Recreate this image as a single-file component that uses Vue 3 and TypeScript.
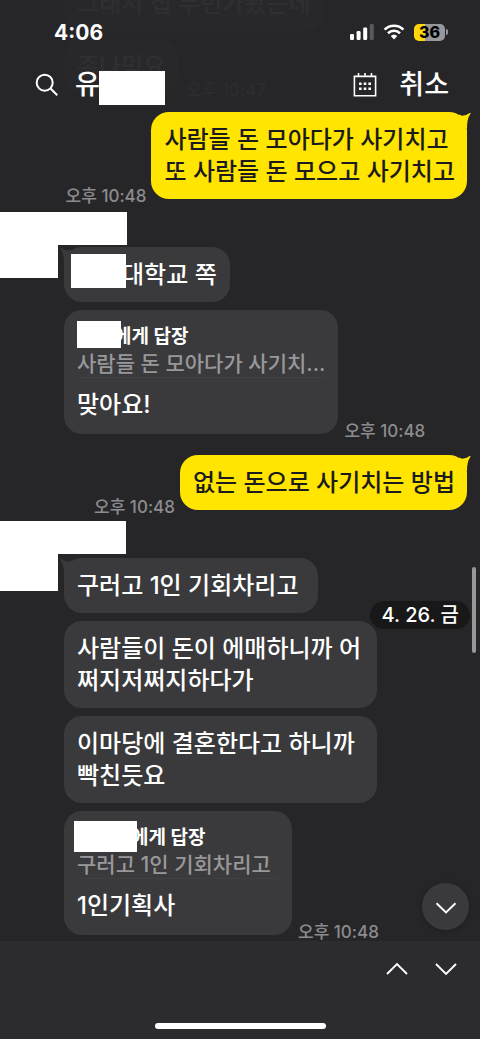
<script setup lang="ts">
import { ref } from 'vue'

interface Reply {
  to: string
  quote: string
  coverWide: boolean
}

interface Bubble {
  text: string
  covered?: boolean
  reply?: Reply
  time?: string
}

interface Group {
  mine: boolean
  bubbles: Bubble[]
}

const groups = ref<Group[]>([
  {
    mine: true,
    bubbles: [{ text: '사람들 돈 모아다가 사기치고\n또 사람들 돈 모으고 사기치고', time: '오후 10:48' }],
  },
  {
    mine: false,
    bubbles: [
      { text: '대학교 쪽', covered: true },
      {
        text: '맞아요!',
        reply: { to: '에게 답장', quote: '사람들 돈 모아다가 사기치...', coverWide: false },
        time: '오후 10:48',
      },
    ],
  },
  {
    mine: true,
    bubbles: [{ text: '없는 돈으로 사기치는 방법', time: '오후 10:48' }],
  },
  {
    mine: false,
    bubbles: [
      { text: '구러고 1인 기회차리고\u00a0' },
      { text: '사람들이 돈이 에매하니까 어쩌지저쩌지하다가' },
      { text: '이마당에 결혼한다고 하니까 빡친듯요' },
      {
        text: '1인기획사',
        reply: { to: '에게 답장', quote: '구러고 1인 기회차리고\u00a0', coverWide: true },
        time: '오후 10:48',
      },
    ],
  },
])
</script>

<template>
  <div class="screen">
    <header class="top">
      <div class="ghost" aria-hidden="true">
        <p class="ghost-bubble first">그래서 집 두번가봤는데</p>
        <p class="ghost-bubble second">존나먹요</p>
        <span class="ghost-time">오후 10:47</span>
      </div>
      <div class="status">
        <span class="clock">4:06</span>
        <div class="status-icons">
          <svg class="signal" viewBox="0 0 24 16" aria-hidden="true">
            <rect x="0" y="10" width="4" height="6" rx="1.3" />
            <rect x="6.6" y="7" width="4" height="9" rx="1.3" />
            <rect x="13.2" y="3.5" width="4" height="12.5" rx="1.3" />
            <rect x="19.8" y="0" width="4" height="16" rx="1.3" class="dim" />
          </svg>
          <svg class="wifi" viewBox="0 0 22 16" aria-hidden="true">
            <path d="M1.6 5.6a13.4 13.4 0 0 1 18.8 0" />
            <path d="M5 9.2a8.6 8.6 0 0 1 12 0" />
            <path class="dot" d="M7.7 12a4.8 4.8 0 0 1 6.6 0L11 15.6z" />
          </svg>
          <div class="battery"><span class="cell">36</span><i class="nub"></i></div>
        </div>
      </div>
      <div class="bar">
        <svg class="search" viewBox="0 0 24 24" aria-hidden="true">
          <circle cx="9.7" cy="9.7" r="8" />
          <path d="M15.5 15.5l6.8 6.8" />
        </svg>
        <h1 class="title">유<span class="cover title-cover"></span></h1>
        <button class="plain calendar" type="button" aria-label="날짜 선택">
          <svg viewBox="0 0 24 26">
            <path class="frame" d="M1.4 4.4h21.2v19.4H1.4zM5.5 1v3.4M12 1v3.4M18.5 1v3.4" />
            <path
              class="dots"
              d="M6 10.5h2.6v2.6H6zM10.7 10.5h2.6v2.6h-2.6zM15.4 10.5H18v2.6h-2.6zM6 15.4h2.6V18H6zM10.7 15.4h2.6V18h-2.6zM15.4 15.4H18V18h-2.6z"
            />
          </svg>
        </button>
        <button class="plain cancel" type="button">취소</button>
      </div>
    </header>

    <main class="chat">
      <section v-for="(g, gi) in groups" :key="gi" class="group" :class="g.mine ? 'mine' : 'theirs'">
        <div v-if="!g.mine" class="avatar"></div>
        <div class="column">
          <div v-if="!g.mine" class="sender"></div>
          <div v-for="(b, bi) in g.bubbles" :key="bi" class="row">
            <div class="bubble" :class="{ reply: b.reply }">
              <svg v-if="bi === 0" class="tail" viewBox="0 0 12 16" aria-hidden="true">
                <path d="M0 2.400L3 3.800Q7.500 3.200 10.300 1.200Q12.500 0.200 11.300 2Q8 6.500 8 16L0 16z" />
              </svg>
              <template v-if="b.reply">
                <p class="to" :class="{ wide: b.reply.coverWide }"><span class="cover"></span>{{ b.reply.to }}</p>
                <p class="quote">{{ b.reply.quote }}</p>
              </template>
              <div class="line">
                <span v-if="b.covered" class="cover text-cover"></span>
                <p>{{ b.text }}</p>
              </div>
            </div>
            <time v-if="b.time" class="time">{{ b.time }}</time>
          </div>
        </div>
      </section>

      <div class="date-pill">4. 26. 금</div>
      <div class="scrollbar"></div>
      <button class="fab" type="button" aria-label="맨 아래로">
        <svg viewBox="0 0 22 12"><path d="M1.500 1.200L11 10.500L20.500 1.200" /></svg>
      </button>
    </main>

    <footer class="bottom">
      <div class="nav">
        <button class="plain step" type="button" aria-label="이전 결과">
          <svg viewBox="0 0 22 14"><path d="M1 12L11 2L21 12" /></svg>
        </button>
        <button class="plain step" type="button" aria-label="다음 결과">
          <svg viewBox="0 0 22 14"><path d="M1 2L11 12L21 2" /></svg>
        </button>
      </div>
      <div class="home"></div>
    </footer>
  </div>
</template>

<style>
body {
  background: #262628;
}
</style>

<style scoped>
.screen {
  display: flex;
  flex-direction: column;
  min-height: 100vh;
  background: #262628;
  color: #fff;
  font-family: Inter, 'Noto Sans CJK KR', sans-serif;
  font-weight: 500;
}
p,
h1 {
  margin: 0;
}
.plain {
  padding: 0;
  border: 0;
  background: none;
  color: inherit;
  font: inherit;
}
svg {
  display: block;
}
.cover {
  flex: none;
  background: #fff;
}

/* header */
.top {
  position: relative;
  overflow: hidden;
  height: 112px;
}
.ghost {
  position: absolute;
  inset: 0;
  color: #2f2f31;
  font-size: 24px;
  line-height: 32px;
}
.ghost-bubble {
  position: absolute;
  left: 64px;
  padding: 12px 13px 11px;
  border-radius: 18px;
  background: #28282a;
}
.first {
  top: -24px;
}
.second {
  top: 39px;
}
.ghost-time {
  position: absolute;
  left: 186px;
  top: 80px;
  color: #2c2c2e;
  font-size: 17px;
  line-height: 20px;
}
.status {
  position: relative;
  display: flex;
  justify-content: space-between;
  align-items: center;
  height: 20px;
  padding: 22px 32px 0 54px;
}
.clock {
  font-size: 21px;
  font-weight: 700;
}
.status-icons {
  display: flex;
  align-items: center;
  gap: 9px;
}
.signal {
  width: 24px;
  height: 16px;
  fill: #fff;
}
.dim {
  fill: #59595b;
}
.wifi {
  width: 22px;
  height: 16px;
  fill: none;
  stroke: #fff;
  stroke-width: 2.7;
}
.wifi .dot {
  fill: #fff;
  stroke: none;
}
.battery {
  display: flex;
  align-items: center;
  gap: 1px;
}
.cell {
  width: 31px;
  height: 17px;
  border-radius: 5px;
  background: linear-gradient(90deg, #ffd60a 36%, #98989b 36%);
  color: #000;
  font-size: 16px;
  font-weight: 800;
  line-height: 17px;
  text-align: center;
}
.nub {
  width: 2px;
  height: 6px;
  border-radius: 0 2px 2px 0;
  background: #98989b;
}
.bar {
  position: relative;
  display: flex;
  align-items: center;
  height: 36px;
  margin-top: 25px;
  padding: 0 32px 0 35px;
  font-size: 27px;
  line-height: 36px;
}
.search {
  width: 24px;
  height: 24px;
  fill: none;
  stroke: #fff;
  stroke-width: 2;
}
.title {
  display: flex;
  align-items: center;
  margin-left: 16px;
  font-size: 27px;
  font-weight: 500;
}
.title-cover {
  width: 66px;
  height: 34px;
  margin: 5px 0 0 -1px;
  z-index: 1;
}
.calendar {
  margin-left: auto;
}
.calendar svg {
  width: 24px;
  height: 26px;
}
.frame {
  fill: none;
  stroke: #fff;
  stroke-width: 1.6;
}
.dots {
  fill: #fff;
}
.cancel {
  margin-left: 22px;
  margin-right: -1px;
}

/* conversation */
.chat {
  position: relative;
  flex: 1;
  padding-bottom: 6px;
}
.group {
  display: flex;
}
.mine {
  justify-content: flex-end;
  padding-right: 13px;
}
.theirs {
  margin: 13px 0 21px;
}
.avatar {
  width: 58px;
  height: 66px;
  margin-right: 6px;
  background: #fff;
}
.column {
  display: flex;
  flex-direction: column;
  gap: 8px;
}
.sender {
  width: 69px;
  height: 33px;
  margin: 0 0 -6px -6px;
  background: #fff;
}
.theirs:nth-of-type(4) {
  margin: 11px 0 0;
}
.theirs:nth-of-type(4) .avatar {
  height: 70px;
}
.theirs:nth-of-type(4) .sender {
  width: 68px;
  margin-bottom: -4px;
}
.row {
  display: flex;
  align-items: flex-end;
}
.mine .row {
  flex-direction: row-reverse;
}
.bubble {
  position: relative;
  box-sizing: border-box;
  max-width: 313px;
  padding: 12px 13px 11px;
  border-radius: 18px;
  background: #3a3a3c;
  font-size: 24px;
  line-height: 32px;
}
.mine .bubble {
  max-width: 320px;
  padding-right: 12px;
  background: #ffe500;
  color: #1b1b1d;
}
.tail {
  position: absolute;
  top: 0;
  right: -4px;
  width: 12px;
  height: 16px;
  fill: #ffe500;
}
.theirs .tail {
  right: auto;
  left: -4px;
  fill: #3a3a3c;
  transform: scaleX(-1);
}
.line {
  display: flex;
  align-items: center;
}
.line p {
  white-space: pre-wrap;
}
.text-cover {
  width: 55px;
  height: 34px;
  margin: -6px -4px 2px -6px;
  z-index: 1;
}
.bubble.reply {
  padding: 13px;
}
.to {
  display: flex;
  align-items: center;
  height: 28px;
  font-size: 19px;
  font-weight: 700;
  line-height: 28px;
}
.to .cover {
  width: 44px;
  height: 27px;
  margin: 0 -7px 6px 0;
  z-index: 1;
}
.to.wide .cover {
  width: 63px;
  height: 31px;
  margin: 0 -6px 4px -3px;
}
.quote {
  min-width: 202px;
  margin-bottom: 11px;
  border-bottom: 1px solid #404042;
  color: #98989a;
  font-size: 21px;
  line-height: 26px;
  white-space: nowrap;
}
.time {
  margin: 0 6px -7px;
  color: #8c8c8e;
  font-size: 17px;
  line-height: 20px;
  white-space: nowrap;
}
.mine .time {
  margin-right: 5px;
}

/* overlays on the conversation */
.date-pill {
  position: absolute;
  top: 489px;
  right: 10px;
  padding: 0 11px;
  border-radius: 14px;
  background: #181819;
  font-size: 20px;
  line-height: 28px;
}
.scrollbar {
  position: absolute;
  top: 455px;
  right: 4px;
  width: 4px;
  height: 86px;
  border-radius: 2px;
  background: #98989a;
}
.fab {
  position: absolute;
  right: 11px;
  bottom: 11px;
  display: grid;
  place-items: center;
  width: 47px;
  height: 47px;
  padding: 2px 0 0;
  border: 0;
  border-radius: 50%;
  background: #3a3a3c;
  box-shadow: 0 1px 6px rgba(0, 0, 0, 0.2);
}
.fab svg {
  width: 22px;
  height: 12px;
}
.fab path,
.step path {
  fill: none;
  stroke: #fff;
  stroke-width: 1.9;
}

/* footer */
.bottom {
  display: flex;
  flex-direction: column;
  justify-content: space-between;
  align-items: center;
  height: 98px;
  background: #2c2c2e;
}
.nav {
  display: flex;
  align-self: flex-end;
  gap: 27px;
  padding: 21px 23px 0 0;
}
.step svg {
  width: 22px;
  height: 14px;
}
.home {
  width: 171px;
  height: 6px;
  margin-bottom: 10px;
  border-radius: 3px;
  background: #fff;
}
</style>
